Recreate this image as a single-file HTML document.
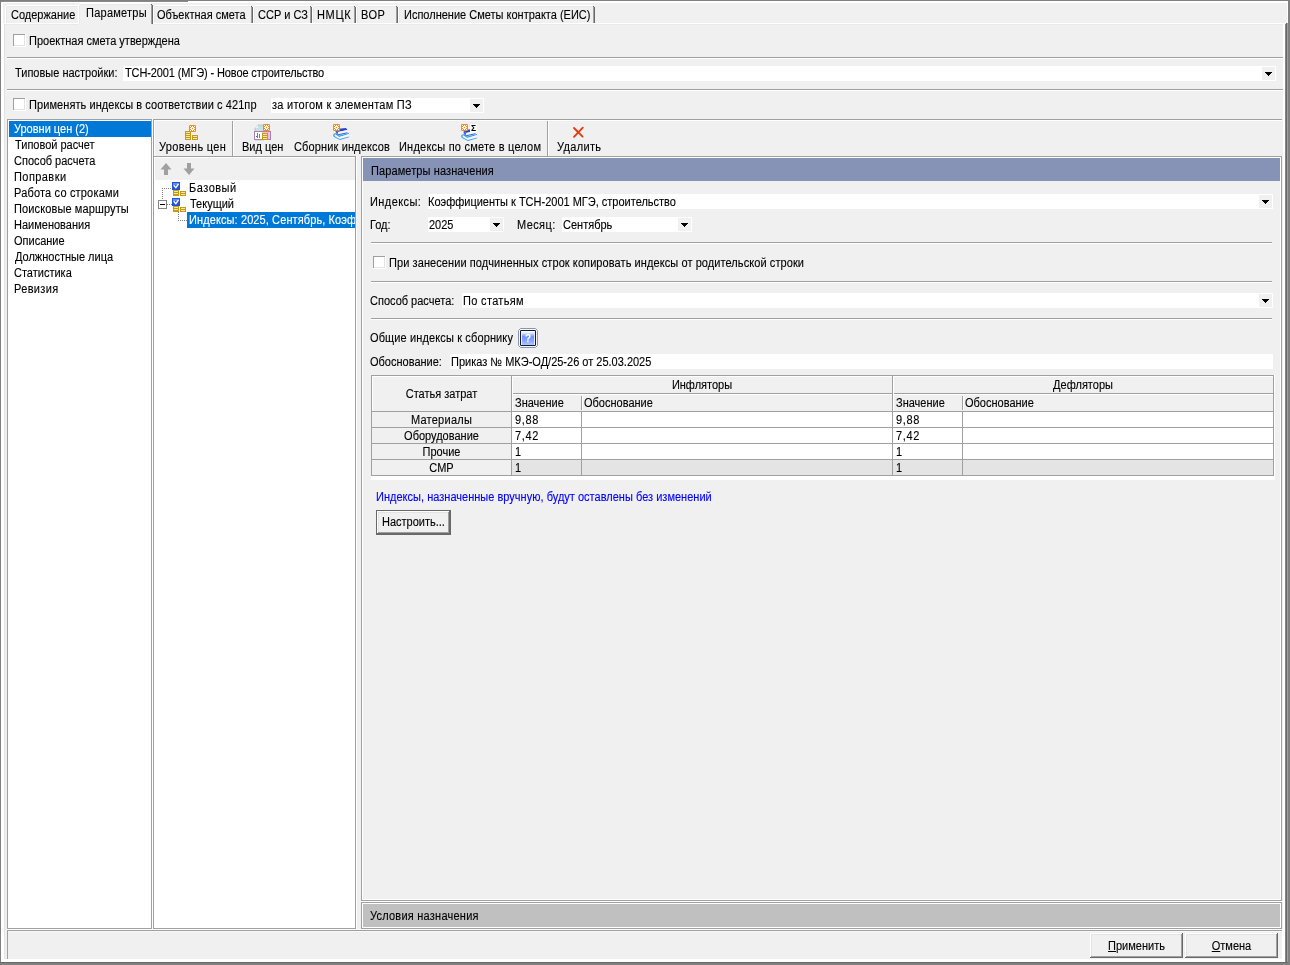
<!DOCTYPE html>
<html lang="ru"><head><meta charset="utf-8"><title>Параметры</title>
<style>
html,body{margin:0;padding:0}
body{width:1290px;height:965px;background:#f0f0f0;position:relative;overflow:hidden;
font-family:"Liberation Sans",sans-serif;font-size:12px;line-height:14px}
#w{position:absolute;left:0;top:0;width:1290px;height:965px;will-change:transform}
#w>div,#w>span,#w>svg{position:absolute}
.t{-webkit-text-stroke:0.12px currentColor;white-space:nowrap;display:block;height:14px;transform:scaleX(0.9167);transform-origin:0 0}
.c{text-align:center;transform-origin:50% 0}
u{text-decoration:underline;text-underline-offset:1px}
</style></head><body><div id="w">
<div style="left:0px;top:0px;width:1290px;height:1px;background:#808080;"></div>
<div style="left:0px;top:1px;width:188px;height:1px;background:#8a8a8a;"></div>
<div style="left:188px;top:1px;width:1100px;height:1px;background:#ffffff;"></div>
<div style="left:1px;top:2px;width:1287px;height:1px;background:#ffffff;"></div>
<div style="left:0px;top:0px;width:1px;height:965px;background:#808080;"></div>
<div style="left:1px;top:2px;width:2px;height:960px;background:#ffffff;"></div>
<div style="left:1288px;top:0px;width:2px;height:965px;background:#808080;"></div>
<div style="left:1287px;top:1px;width:1px;height:22px;background:#ffffff;"></div>
<div style="left:3px;top:23px;width:1282px;height:1px;background:#ffffff;"></div>
<div style="left:3px;top:24px;width:1280px;height:1px;background:#e9e9e9;"></div>
<div style="left:3px;top:23px;width:1px;height:939px;background:#ffffff;"></div>
<div style="left:4px;top:24px;width:1px;height:935px;background:#e3e3e3;"></div>
<div style="left:1283px;top:24px;width:2px;height:938px;background:#ffffff;"></div>
<div style="left:1285px;top:24px;width:1px;height:939px;background:#868686;"></div>
<div style="left:1286px;top:23px;width:1px;height:940px;background:#696969;"></div>
<div style="left:1287px;top:23px;width:1px;height:940px;background:#a0a0a0;"></div>
<div style="left:1px;top:959px;width:1284px;height:3px;background:#ffffff;"></div>
<div style="left:0px;top:962px;width:1288px;height:1px;background:#696969;"></div>
<div style="left:0px;top:963px;width:1290px;height:2px;background:#808080;"></div>
<div style="left:5px;top:7px;width:75px;height:16px;background:#f0f0f0;"></div>
<div style="left:7px;top:5px;width:71px;height:1px;background:#ffffff;"></div>
<div style="left:6px;top:6px;width:1px;height:1px;background:#ffffff;"></div>
<div style="left:5px;top:7px;width:1px;height:16px;background:#ffffff;"></div>
<div style="left:6px;top:7px;width:1px;height:16px;background:#e9e9e9;"></div>
<div style="left:7px;top:6px;width:71px;height:1px;background:#e9e9e9;"></div>
<div style="left:78px;top:7px;width:1px;height:16px;background:#a0a0a0;"></div>
<div style="left:79px;top:7px;width:1px;height:16px;background:#696969;"></div>
<div style="left:78px;top:6px;width:1px;height:1px;background:#696969;"></div>
<span class="t" style="left:11px;top:8px;color:#000;">Содержание</span>
<div style="left:153px;top:7px;width:100px;height:16px;background:#f0f0f0;"></div>
<div style="left:155px;top:5px;width:96px;height:1px;background:#ffffff;"></div>
<div style="left:154px;top:6px;width:1px;height:1px;background:#ffffff;"></div>
<div style="left:153px;top:7px;width:1px;height:16px;background:#ffffff;"></div>
<div style="left:154px;top:7px;width:1px;height:16px;background:#e9e9e9;"></div>
<div style="left:155px;top:6px;width:96px;height:1px;background:#e9e9e9;"></div>
<div style="left:251px;top:7px;width:1px;height:16px;background:#a0a0a0;"></div>
<div style="left:252px;top:7px;width:1px;height:16px;background:#696969;"></div>
<div style="left:251px;top:6px;width:1px;height:1px;background:#696969;"></div>
<span class="t" style="left:157px;top:8px;color:#000;">Объектная смета</span>
<div style="left:253px;top:7px;width:59px;height:16px;background:#f0f0f0;"></div>
<div style="left:255px;top:5px;width:55px;height:1px;background:#ffffff;"></div>
<div style="left:254px;top:6px;width:1px;height:1px;background:#ffffff;"></div>
<div style="left:253px;top:7px;width:1px;height:16px;background:#ffffff;"></div>
<div style="left:254px;top:7px;width:1px;height:16px;background:#e9e9e9;"></div>
<div style="left:255px;top:6px;width:55px;height:1px;background:#e9e9e9;"></div>
<div style="left:310px;top:7px;width:1px;height:16px;background:#a0a0a0;"></div>
<div style="left:311px;top:7px;width:1px;height:16px;background:#696969;"></div>
<div style="left:310px;top:6px;width:1px;height:1px;background:#696969;"></div>
<span class="t" style="left:258px;top:8px;color:#000;">ССР и СЗ</span>
<div style="left:312px;top:7px;width:44px;height:16px;background:#f0f0f0;"></div>
<div style="left:314px;top:5px;width:40px;height:1px;background:#ffffff;"></div>
<div style="left:313px;top:6px;width:1px;height:1px;background:#ffffff;"></div>
<div style="left:312px;top:7px;width:1px;height:16px;background:#ffffff;"></div>
<div style="left:313px;top:7px;width:1px;height:16px;background:#e9e9e9;"></div>
<div style="left:314px;top:6px;width:40px;height:1px;background:#e9e9e9;"></div>
<div style="left:354px;top:7px;width:1px;height:16px;background:#a0a0a0;"></div>
<div style="left:355px;top:7px;width:1px;height:16px;background:#696969;"></div>
<div style="left:354px;top:6px;width:1px;height:1px;background:#696969;"></div>
<span class="t" style="left:317px;top:8px;color:#000;letter-spacing:0.727px;">НМЦК</span>
<div style="left:356px;top:7px;width:42px;height:16px;background:#f0f0f0;"></div>
<div style="left:358px;top:5px;width:38px;height:1px;background:#ffffff;"></div>
<div style="left:357px;top:6px;width:1px;height:1px;background:#ffffff;"></div>
<div style="left:356px;top:7px;width:1px;height:16px;background:#ffffff;"></div>
<div style="left:357px;top:7px;width:1px;height:16px;background:#e9e9e9;"></div>
<div style="left:358px;top:6px;width:38px;height:1px;background:#e9e9e9;"></div>
<div style="left:396px;top:7px;width:1px;height:16px;background:#a0a0a0;"></div>
<div style="left:397px;top:7px;width:1px;height:16px;background:#696969;"></div>
<div style="left:396px;top:6px;width:1px;height:1px;background:#696969;"></div>
<span class="t" style="left:361px;top:8px;color:#000;letter-spacing:0.545px;">ВОР</span>
<div style="left:398px;top:7px;width:197px;height:16px;background:#f0f0f0;"></div>
<div style="left:400px;top:5px;width:193px;height:1px;background:#ffffff;"></div>
<div style="left:399px;top:6px;width:1px;height:1px;background:#ffffff;"></div>
<div style="left:398px;top:7px;width:1px;height:16px;background:#ffffff;"></div>
<div style="left:399px;top:7px;width:1px;height:16px;background:#e9e9e9;"></div>
<div style="left:400px;top:6px;width:193px;height:1px;background:#e9e9e9;"></div>
<div style="left:593px;top:7px;width:1px;height:16px;background:#a0a0a0;"></div>
<div style="left:594px;top:7px;width:1px;height:16px;background:#696969;"></div>
<div style="left:593px;top:6px;width:1px;height:1px;background:#696969;"></div>
<span class="t" style="left:404px;top:8px;color:#000;">Исполнение Сметы контракта (ЕИС)</span>
<div style="left:78px;top:23px;width:73px;height:2px;background:#f0f0f0;"></div>
<div style="left:78px;top:5px;width:75px;height:19px;background:#f0f0f0;"></div>
<div style="left:80px;top:3px;width:71px;height:1px;background:#ffffff;"></div>
<div style="left:79px;top:4px;width:1px;height:1px;background:#ffffff;"></div>
<div style="left:78px;top:5px;width:1px;height:19px;background:#ffffff;"></div>
<div style="left:79px;top:5px;width:1px;height:19px;background:#e9e9e9;"></div>
<div style="left:80px;top:4px;width:71px;height:1px;background:#e9e9e9;"></div>
<div style="left:151px;top:5px;width:1px;height:19px;background:#a0a0a0;"></div>
<div style="left:152px;top:5px;width:1px;height:19px;background:#696969;"></div>
<div style="left:151px;top:4px;width:1px;height:1px;background:#696969;"></div>
<span class="t" style="left:86px;top:6px;color:#000;letter-spacing:0.273px;">Параметры</span>
<div style="left:13px;top:34px;width:13px;height:13px;background:#ffffff;"></div>
<div style="left:13px;top:34px;width:13px;height:1px;background:#a0a0a0;"></div>
<div style="left:13px;top:34px;width:1px;height:13px;background:#a0a0a0;"></div>
<div style="left:24px;top:35px;width:1px;height:11px;background:#e3e3e3;"></div>
<div style="left:14px;top:45px;width:11px;height:1px;background:#e3e3e3;"></div>
<div style="left:25px;top:34px;width:1px;height:13px;background:#ffffff;"></div>
<div style="left:13px;top:46px;width:13px;height:1px;background:#ffffff;"></div>
<span class="t" style="left:29px;top:34px;color:#000;">Проектная смета утверждена</span>
<div style="left:7px;top:57px;width:1276px;height:1px;background:#a0a0a0;"></div>
<div style="left:7px;top:58px;width:1276px;height:1px;background:#ffffff;"></div>
<span class="t" style="left:15px;top:66px;color:#000;">Типовые настройки:</span>
<div style="left:123px;top:66px;width:1153px;height:15px;background:#ffffff;"></div>
<div style="left:1262px;top:67px;width:13px;height:13px;background:#f0f0f0;"></div>
<div style="left:1265px;top:72px;width:7px;height:1px;background:#000;"></div>
<div style="left:1266px;top:73px;width:5px;height:1px;background:#000;"></div>
<div style="left:1267px;top:74px;width:3px;height:1px;background:#000;"></div>
<div style="left:1268px;top:75px;width:1px;height:1px;background:#000;"></div>
<span class="t" style="left:125px;top:66px;color:#000;letter-spacing:-0.125px;">ТСН-2001 (МГЭ) - Новое строительство</span>
<div style="left:7px;top:89px;width:1276px;height:1px;background:#a0a0a0;"></div>
<div style="left:7px;top:90px;width:1276px;height:1px;background:#ffffff;"></div>
<div style="left:13px;top:98px;width:13px;height:13px;background:#ffffff;"></div>
<div style="left:13px;top:98px;width:13px;height:1px;background:#a0a0a0;"></div>
<div style="left:13px;top:98px;width:1px;height:13px;background:#a0a0a0;"></div>
<div style="left:24px;top:99px;width:1px;height:11px;background:#e3e3e3;"></div>
<div style="left:14px;top:109px;width:11px;height:1px;background:#e3e3e3;"></div>
<div style="left:25px;top:98px;width:1px;height:13px;background:#ffffff;"></div>
<div style="left:13px;top:110px;width:13px;height:1px;background:#ffffff;"></div>
<span class="t" style="left:29px;top:98px;color:#000;letter-spacing:0.084px;">Применять индексы в соответствии с 421пр</span>
<div style="left:271px;top:98px;width:213px;height:15px;background:#ffffff;"></div>
<div style="left:470px;top:99px;width:13px;height:13px;background:#f0f0f0;"></div>
<div style="left:473px;top:104px;width:7px;height:1px;background:#000;"></div>
<div style="left:474px;top:105px;width:5px;height:1px;background:#000;"></div>
<div style="left:475px;top:106px;width:3px;height:1px;background:#000;"></div>
<div style="left:476px;top:107px;width:1px;height:1px;background:#000;"></div>
<span class="t" style="left:272px;top:98px;color:#000;letter-spacing:0.285px;">за итогом к элементам ПЗ</span>
<div style="left:7px;top:119px;width:1275px;height:1px;background:#a0a0a0;"></div>
<div style="left:7px;top:119px;width:1px;height:810px;background:#a0a0a0;"></div>
<div style="left:8px;top:120px;width:143px;height:808px;background:#ffffff;"></div>
<div style="left:151px;top:119px;width:1px;height:810px;background:#a0a0a0;"></div>
<div style="left:7px;top:928px;width:145px;height:1px;background:#a0a0a0;"></div>
<div style="left:152px;top:119px;width:1px;height:811px;background:#ffffff;"></div>
<div style="left:7px;top:929px;width:1276px;height:1px;background:#ffffff;"></div>
<div style="left:361px;top:901px;width:922px;height:1px;background:#ffffff;"></div>
<div style="left:9px;top:121px;width:142px;height:16px;background:#0078d7;"></div>
<span class="t" style="left:14px;top:122px;color:#fff;">Уровни цен (2)</span>
<span class="t" style="left:15px;top:138px;color:#000;">Типовой расчет</span>
<span class="t" style="left:14px;top:154px;color:#000;">Способ расчета</span>
<span class="t" style="left:14px;top:170px;color:#000;letter-spacing:0.468px;">Поправки</span>
<span class="t" style="left:14px;top:186px;color:#000;letter-spacing:0.193px;">Работа со строками</span>
<span class="t" style="left:14px;top:202px;color:#000;letter-spacing:0.128px;">Поисковые маршруты</span>
<span class="t" style="left:14px;top:218px;color:#000;">Наименования</span>
<span class="t" style="left:14px;top:234px;color:#000;">Описание</span>
<span class="t" style="left:15px;top:250px;color:#000;">Должностные лица</span>
<span class="t" style="left:14px;top:266px;color:#000;">Статистика</span>
<span class="t" style="left:14px;top:282px;color:#000;letter-spacing:0.364px;">Ревизия</span>
<div style="left:153px;top:119px;width:1px;height:38px;background:#a0a0a0;"></div>
<div style="left:154px;top:120px;width:1128px;height:1px;background:#ffffff;"></div>
<div style="left:154px;top:120px;width:1px;height:36px;background:#ffffff;"></div>
<div style="left:232px;top:121px;width:1px;height:35px;background:#a0a0a0;"></div>
<div style="left:233px;top:121px;width:1px;height:35px;background:#ffffff;"></div>
<div style="left:547px;top:121px;width:1px;height:35px;background:#a0a0a0;"></div>
<div style="left:548px;top:121px;width:1px;height:35px;background:#ffffff;"></div>
<span class="t" style="left:159px;top:140px;color:#000;letter-spacing:0.327px;">Уровень цен</span>
<span class="t" style="left:242px;top:140px;color:#000;">Вид цен</span>
<span class="t" style="left:294px;top:140px;color:#000;letter-spacing:0.145px;">Сборник индексов</span>
<span class="t" style="left:399px;top:140px;color:#000;letter-spacing:0.237px;">Индексы по смете в целом</span>
<span class="t" style="left:557px;top:140px;color:#000;letter-spacing:0.364px;">Удалить</span>
<div style="left:153px;top:156px;width:203px;height:1px;background:#a0a0a0;"></div>
<div style="left:153px;top:156px;width:1px;height:773px;background:#a0a0a0;"></div>
<div style="left:355px;top:156px;width:1px;height:773px;background:#a0a0a0;"></div>
<div style="left:356px;top:156px;width:1px;height:773px;background:#ffffff;"></div>
<div style="left:153px;top:928px;width:203px;height:1px;background:#a0a0a0;"></div>
<div style="left:154px;top:157px;width:201px;height:771px;background:#ffffff;"></div>
<div style="left:155px;top:158px;width:200px;height:22px;background:#f0f0f0;"></div>
<span class="t" style="left:189px;top:181px;color:#000;letter-spacing:0.545px;">Базовый</span>
<span class="t" style="left:190px;top:197px;color:#000;">Текущий</span>
<div style="left:187px;top:212px;width:168px;height:16px;background:#0078d7;"></div>
<span class="t" style="left:189px;top:213px;color:#fff;letter-spacing:0.113px;width:181px;overflow:hidden">Индексы: 2025, Сентябрь, Коэфф</span>
<div style="left:361px;top:156px;width:921px;height:1px;background:#a0a0a0;"></div>
<div style="left:361px;top:156px;width:1px;height:745px;background:#a0a0a0;"></div>
<div style="left:1281px;top:156px;width:1px;height:745px;background:#a0a0a0;"></div>
<div style="left:361px;top:900px;width:921px;height:1px;background:#a0a0a0;"></div>
<div style="left:362px;top:157px;width:919px;height:1px;background:#ffffff;"></div>
<div style="left:362px;top:157px;width:1px;height:743px;background:#ffffff;"></div>
<div style="left:1280px;top:157px;width:1px;height:743px;background:#ffffff;"></div>
<div style="left:362px;top:899px;width:919px;height:1px;background:#ffffff;"></div>
<div style="left:363px;top:158px;width:917px;height:23px;background:#8693b7;"></div>
<span class="t" style="left:371px;top:164px;color:#000;letter-spacing:0.115px;">Параметры назначения</span>
<span class="t" style="left:370px;top:195px;color:#000;letter-spacing:0.468px;">Индексы:</span>
<div style="left:428px;top:194px;width:845px;height:15px;background:#ffffff;"></div>
<div style="left:1259px;top:195px;width:13px;height:13px;background:#f0f0f0;"></div>
<div style="left:1262px;top:200px;width:7px;height:1px;background:#000;"></div>
<div style="left:1263px;top:201px;width:5px;height:1px;background:#000;"></div>
<div style="left:1264px;top:202px;width:3px;height:1px;background:#000;"></div>
<div style="left:1265px;top:203px;width:1px;height:1px;background:#000;"></div>
<span class="t" style="left:428px;top:195px;color:#000;">Коэффициенты к ТСН-2001 МГЭ, строительство</span>
<span class="t" style="left:370px;top:218px;color:#000;">Год:</span>
<div style="left:428px;top:217px;width:76px;height:15px;background:#ffffff;"></div>
<div style="left:490px;top:218px;width:13px;height:13px;background:#f0f0f0;"></div>
<div style="left:493px;top:223px;width:7px;height:1px;background:#000;"></div>
<div style="left:494px;top:224px;width:5px;height:1px;background:#000;"></div>
<div style="left:495px;top:225px;width:3px;height:1px;background:#000;"></div>
<div style="left:496px;top:226px;width:1px;height:1px;background:#000;"></div>
<span class="t" style="left:429px;top:218px;color:#000;">2025</span>
<span class="t" style="left:517px;top:218px;color:#000;letter-spacing:0.436px;">Месяц:</span>
<div style="left:562px;top:217px;width:130px;height:15px;background:#ffffff;"></div>
<div style="left:678px;top:218px;width:13px;height:13px;background:#f0f0f0;"></div>
<div style="left:681px;top:223px;width:7px;height:1px;background:#000;"></div>
<div style="left:682px;top:224px;width:5px;height:1px;background:#000;"></div>
<div style="left:683px;top:225px;width:3px;height:1px;background:#000;"></div>
<div style="left:684px;top:226px;width:1px;height:1px;background:#000;"></div>
<span class="t" style="left:563px;top:218px;color:#000;">Сентябрь</span>
<div style="left:371px;top:242px;width:901px;height:1px;background:#a0a0a0;"></div>
<div style="left:371px;top:243px;width:901px;height:1px;background:#ffffff;"></div>
<div style="left:373px;top:256px;width:13px;height:13px;background:#ffffff;"></div>
<div style="left:373px;top:256px;width:13px;height:1px;background:#a0a0a0;"></div>
<div style="left:373px;top:256px;width:1px;height:13px;background:#a0a0a0;"></div>
<div style="left:384px;top:257px;width:1px;height:11px;background:#e3e3e3;"></div>
<div style="left:374px;top:267px;width:11px;height:1px;background:#e3e3e3;"></div>
<div style="left:385px;top:256px;width:1px;height:13px;background:#ffffff;"></div>
<div style="left:373px;top:268px;width:13px;height:1px;background:#ffffff;"></div>
<span class="t" style="left:389px;top:256px;color:#000;letter-spacing:0.091px;">При занесении подчиненных строк копировать индексы от родительской строки</span>
<div style="left:371px;top:281px;width:901px;height:1px;background:#a0a0a0;"></div>
<div style="left:371px;top:282px;width:901px;height:1px;background:#ffffff;"></div>
<span class="t" style="left:370px;top:294px;color:#000;">Способ расчета:</span>
<div style="left:462px;top:293px;width:811px;height:15px;background:#ffffff;"></div>
<div style="left:1259px;top:294px;width:13px;height:13px;background:#f0f0f0;"></div>
<div style="left:1262px;top:299px;width:7px;height:1px;background:#000;"></div>
<div style="left:1263px;top:300px;width:5px;height:1px;background:#000;"></div>
<div style="left:1264px;top:301px;width:3px;height:1px;background:#000;"></div>
<div style="left:1265px;top:302px;width:1px;height:1px;background:#000;"></div>
<span class="t" style="left:463px;top:294px;color:#000;letter-spacing:0.364px;">По статьям</span>
<div style="left:371px;top:318px;width:901px;height:1px;background:#a0a0a0;"></div>
<div style="left:371px;top:319px;width:901px;height:1px;background:#ffffff;"></div>
<span class="t" style="left:370px;top:331px;color:#000;letter-spacing:0.142px;">Общие индексы к сборнику</span>
<span class="t" style="left:370px;top:355px;color:#000;">Обоснование:</span>
<div style="left:450px;top:354px;width:823px;height:15px;background:#ffffff;"></div>
<span class="t" style="left:451px;top:355px;color:#000;">Приказ № МКЭ-ОД/25-26 от 25.03.2025</span>
<div style="left:371px;top:375px;width:904px;height:105px;background:#ffffff;"></div>
<div style="left:371px;top:375px;width:903px;height:37px;background:#f0f0f0;"></div>
<div style="left:371px;top:412px;width:141px;height:64px;background:#f0f0f0;"></div>
<div style="left:512px;top:460px;width:762px;height:16px;background:#e4e4e4;"></div>
<div style="left:371px;top:375px;width:903px;height:1px;background:#a0a0a0;"></div>
<div style="left:371px;top:375px;width:1px;height:101px;background:#a0a0a0;"></div>
<div style="left:1273px;top:375px;width:1px;height:101px;background:#a0a0a0;"></div>
<div style="left:511px;top:375px;width:1px;height:101px;background:#a0a0a0;"></div>
<div style="left:892px;top:375px;width:1px;height:101px;background:#a0a0a0;"></div>
<div style="left:581px;top:396px;width:1px;height:14px;background:#a0a0a0;"></div>
<div style="left:581px;top:411px;width:1px;height:65px;background:#a0a0a0;"></div>
<div style="left:962px;top:396px;width:1px;height:14px;background:#a0a0a0;"></div>
<div style="left:962px;top:411px;width:1px;height:65px;background:#a0a0a0;"></div>
<div style="left:511px;top:393px;width:763px;height:1px;background:#a0a0a0;"></div>
<div style="left:371px;top:411px;width:903px;height:1px;background:#a0a0a0;"></div>
<div style="left:371px;top:427px;width:903px;height:1px;background:#a0a0a0;"></div>
<div style="left:371px;top:443px;width:903px;height:1px;background:#a0a0a0;"></div>
<div style="left:371px;top:459px;width:903px;height:1px;background:#a0a0a0;"></div>
<div style="left:371px;top:475px;width:903px;height:1px;background:#a0a0a0;"></div>
<div style="left:372px;top:376px;width:139px;height:1px;background:#ffffff;"></div>
<div style="left:372px;top:376px;width:1px;height:35px;background:#ffffff;"></div>
<div style="left:512px;top:376px;width:380px;height:1px;background:#ffffff;"></div>
<div style="left:512px;top:376px;width:1px;height:35px;background:#ffffff;"></div>
<div style="left:893px;top:376px;width:380px;height:1px;background:#ffffff;"></div>
<div style="left:893px;top:376px;width:1px;height:35px;background:#ffffff;"></div>
<div style="left:512px;top:394px;width:380px;height:1px;background:#ffffff;"></div>
<div style="left:893px;top:394px;width:380px;height:1px;background:#ffffff;"></div>
<div style="left:582px;top:396px;width:1px;height:14px;background:#ffffff;"></div>
<div style="left:963px;top:396px;width:1px;height:14px;background:#ffffff;"></div>
<span class="t c" style="left:372px;width:139px;top:387px;color:#000;">Статья затрат</span>
<span class="t c" style="left:512px;width:380px;top:378px;color:#000;">Инфляторы</span>
<span class="t c" style="left:893px;width:380px;top:378px;color:#000;">Дефляторы</span>
<span class="t" style="left:515px;top:396px;color:#000;">Значение</span>
<span class="t" style="left:584px;top:396px;color:#000;">Обоснование</span>
<span class="t" style="left:896px;top:396px;color:#000;">Значение</span>
<span class="t" style="left:965px;top:396px;color:#000;">Обоснование</span>
<span class="t c" style="left:372px;width:139px;top:413px;color:#000;letter-spacing:0.273px;">Материалы</span>
<span class="t" style="left:515px;top:413px;color:#000;letter-spacing:0.727px;">9,88</span>
<span class="t" style="left:896px;top:413px;color:#000;letter-spacing:0.727px;">9,88</span>
<span class="t c" style="left:372px;width:139px;top:429px;color:#000;">Оборудование</span>
<span class="t" style="left:515px;top:429px;color:#000;letter-spacing:0.727px;">7,42</span>
<span class="t" style="left:896px;top:429px;color:#000;letter-spacing:0.727px;">7,42</span>
<span class="t c" style="left:372px;width:139px;top:445px;color:#000;">Прочие</span>
<span class="t" style="left:515px;top:445px;color:#000;">1</span>
<span class="t" style="left:896px;top:445px;color:#000;">1</span>
<span class="t c" style="left:372px;width:139px;top:461px;color:#000;">СМР</span>
<span class="t" style="left:515px;top:461px;color:#000;">1</span>
<span class="t" style="left:896px;top:461px;color:#000;">1</span>
<span class="t" style="left:376px;top:490px;color:#0000ff;letter-spacing:0.019px;">Индексы, назначенные вручную, будут оставлены без изменений</span>
<div style="left:376px;top:510px;width:75px;height:25px;background:#696969;"></div>
<div style="left:377px;top:511px;width:73px;height:23px;background:#f0f0f0;"></div>
<div style="left:377px;top:511px;width:73px;height:1px;background:#ffffff;"></div>
<div style="left:377px;top:511px;width:1px;height:23px;background:#ffffff;"></div>
<div style="left:378px;top:512px;width:71px;height:1px;background:#e3e3e3;"></div>
<div style="left:378px;top:512px;width:1px;height:21px;background:#e3e3e3;"></div>
<div style="left:378px;top:532px;width:71px;height:1px;background:#a0a0a0;"></div>
<div style="left:448px;top:512px;width:1px;height:21px;background:#a0a0a0;"></div>
<div style="left:377px;top:533px;width:73px;height:1px;background:#696969;"></div>
<div style="left:449px;top:511px;width:1px;height:23px;background:#696969;"></div>
<span class="t" style="left:382px;top:515px;color:#000;">Настроить...</span>
<div style="left:361px;top:902px;width:921px;height:1px;background:#a0a0a0;"></div>
<div style="left:361px;top:902px;width:1px;height:27px;background:#a0a0a0;"></div>
<div style="left:1281px;top:902px;width:1px;height:27px;background:#a0a0a0;"></div>
<div style="left:361px;top:928px;width:921px;height:1px;background:#a0a0a0;"></div>
<div style="left:362px;top:903px;width:919px;height:25px;background:#ffffff;"></div>
<div style="left:363px;top:904px;width:917px;height:23px;background:#c0c0c0;"></div>
<span class="t" style="left:370px;top:909px;color:#000;letter-spacing:0.257px;">Условия назначения</span>
<div style="left:7px;top:930px;width:1275px;height:1px;background:#a0a0a0;"></div>
<div style="left:7px;top:930px;width:1px;height:29px;background:#a0a0a0;"></div>
<div style="left:8px;top:931px;width:1274px;height:1px;background:#f8f8f8;"></div>
<div style="left:1282px;top:930px;width:1px;height:29px;background:#ffffff;"></div>
<div style="left:1090px;top:933px;width:93px;height:25px;background:#f0f0f0;"></div>
<div style="left:1090px;top:933px;width:93px;height:1px;background:#ffffff;"></div>
<div style="left:1090px;top:933px;width:1px;height:25px;background:#ffffff;"></div>
<div style="left:1091px;top:934px;width:91px;height:1px;background:#e3e3e3;"></div>
<div style="left:1091px;top:934px;width:1px;height:23px;background:#e3e3e3;"></div>
<div style="left:1091px;top:956px;width:91px;height:1px;background:#a0a0a0;"></div>
<div style="left:1181px;top:934px;width:1px;height:23px;background:#a0a0a0;"></div>
<div style="left:1090px;top:957px;width:93px;height:1px;background:#696969;"></div>
<div style="left:1182px;top:933px;width:1px;height:25px;background:#696969;"></div>
<div style="left:1185px;top:933px;width:93px;height:25px;background:#f0f0f0;"></div>
<div style="left:1185px;top:933px;width:93px;height:1px;background:#ffffff;"></div>
<div style="left:1185px;top:933px;width:1px;height:25px;background:#ffffff;"></div>
<div style="left:1186px;top:934px;width:91px;height:1px;background:#e3e3e3;"></div>
<div style="left:1186px;top:934px;width:1px;height:23px;background:#e3e3e3;"></div>
<div style="left:1186px;top:956px;width:91px;height:1px;background:#a0a0a0;"></div>
<div style="left:1276px;top:934px;width:1px;height:23px;background:#a0a0a0;"></div>
<div style="left:1185px;top:957px;width:93px;height:1px;background:#696969;"></div>
<div style="left:1277px;top:933px;width:1px;height:25px;background:#696969;"></div>
<span class="t c" style="left:1090px;width:93px;top:939px;color:#000;"><u>П</u>рименить</span>
<span class="t c" style="left:1185px;width:93px;top:939px;color:#000;"><u>О</u>тмена</span>
<svg width="1290" height="965" viewBox="0 0 1290 965" style="left:0;top:0" shape-rendering="crispEdges"><rect x="189" y="125" width="7" height="7" rx="1.2" fill="#f68a14" shape-rendering="auto"/><rect x="190" y="126" width="1" height="1" fill="#fff8ee" /><rect x="192" y="126" width="1" height="1" fill="#fff8ee" /><rect x="194" y="126" width="1" height="1" fill="#fff8ee" /><rect x="191" y="127" width="1" height="1" fill="#fff8ee" /><rect x="192" y="127" width="1" height="1" fill="#fff8ee" /><rect x="193" y="127" width="1" height="1" fill="#fff8ee" /><rect x="190" y="128" width="1" height="1" fill="#fff8ee" /><rect x="191" y="128" width="1" height="1" fill="#fff8ee" /><rect x="193" y="128" width="1" height="1" fill="#fff8ee" /><rect x="194" y="128" width="1" height="1" fill="#fff8ee" /><rect x="191" y="129" width="1" height="1" fill="#fff8ee" /><rect x="192" y="129" width="1" height="1" fill="#fff8ee" /><rect x="193" y="129" width="1" height="1" fill="#fff8ee" /><rect x="190" y="130" width="1" height="1" fill="#fff8ee" /><rect x="192" y="130" width="1" height="1" fill="#fff8ee" /><rect x="194" y="130" width="1" height="1" fill="#fff8ee" /><rect x="185" y="131" width="6" height="9" fill="#c39a1c" /><rect x="186" y="132" width="4" height="1" fill="#fbe7a0" /><rect x="186" y="134" width="4" height="1" fill="#fbe7a0" /><rect x="186" y="136" width="4" height="1" fill="#fbe7a0" /><rect x="186" y="138" width="4" height="1" fill="#fbe7a0" /><rect x="192" y="135" width="6" height="5" fill="#c39a1c" /><rect x="193" y="136" width="4" height="1" fill="#fbe7a0" /><rect x="193" y="138" width="4" height="1" fill="#fbe7a0" /><polygon points="258,125 264,125 264,140 255,140 255,128" fill="#c9dfe2" stroke="#9ab8bd" stroke-width="0.6" shape-rendering="auto"/><polygon points="255,128 258,128 258,125" fill="#eef6f7" shape-rendering="auto"/><rect x="254" y="131" width="17" height="9" fill="#a982ad" /><rect x="255" y="132" width="15" height="7" fill="#efbdf0" /><rect x="255" y="132" width="7" height="7" fill="#ffffff" /><rect x="257" y="133" width="1" height="5" fill="#e0409a" /><rect x="259" y="134" width="1" height="4" fill="#e0409a" /><rect x="256" y="136" width="1" height="1" fill="#805090" /><rect x="263" y="124" width="7" height="7" rx="1.2" fill="#f68a14" shape-rendering="auto"/><rect x="264" y="125" width="1" height="1" fill="#fff8ee" /><rect x="266" y="125" width="1" height="1" fill="#fff8ee" /><rect x="268" y="125" width="1" height="1" fill="#fff8ee" /><rect x="265" y="126" width="1" height="1" fill="#fff8ee" /><rect x="266" y="126" width="1" height="1" fill="#fff8ee" /><rect x="267" y="126" width="1" height="1" fill="#fff8ee" /><rect x="264" y="127" width="1" height="1" fill="#fff8ee" /><rect x="265" y="127" width="1" height="1" fill="#fff8ee" /><rect x="267" y="127" width="1" height="1" fill="#fff8ee" /><rect x="268" y="127" width="1" height="1" fill="#fff8ee" /><rect x="265" y="128" width="1" height="1" fill="#fff8ee" /><rect x="266" y="128" width="1" height="1" fill="#fff8ee" /><rect x="267" y="128" width="1" height="1" fill="#fff8ee" /><rect x="264" y="129" width="1" height="1" fill="#fff8ee" /><rect x="266" y="129" width="1" height="1" fill="#fff8ee" /><rect x="268" y="129" width="1" height="1" fill="#fff8ee" /><rect x="262" y="133" width="6" height="7" fill="#c39a1c" /><rect x="263" y="134" width="4" height="1" fill="#fbe7a0" /><rect x="263" y="136" width="4" height="1" fill="#fbe7a0" /><rect x="263" y="138" width="4" height="1" fill="#fbe7a0" /><g shape-rendering="auto"><polygon points="336,129 346,128 347.5,130 338,132" fill="#2846c8"/><polygon points="336,129 338,132 338,134.5 335.5,132" fill="#3c5ae0"/><polygon points="338,132 347.5,130 347.5,132.5 338,134.5" fill="#f4f6fb"/><polygon points="338,134.3 347.5,132.3 347.5,133.2 338,135.2" fill="#3c5ae0"/><polygon points="334,133.5 337,133 339,135.5 349,133 349,134 339.5,137" fill="#3a9fe3"/><polygon points="339.5,137 349,134 349,136.5 339.5,139" fill="#f4f6fb"/><path d="M334,133.5 C332.5,135 333,136.5 335,137.5 L340,140 L349,137.3 L349,136.4 L339.8,139 L335.5,136.8 C334.3,136 334.2,135 335,134.3 Z" fill="#3a9fe3"/></g><rect x="333" y="124" width="7" height="7" rx="1.2" fill="#f68a14" shape-rendering="auto"/><rect x="334" y="125" width="1" height="1" fill="#fff8ee" /><rect x="336" y="125" width="1" height="1" fill="#fff8ee" /><rect x="338" y="125" width="1" height="1" fill="#fff8ee" /><rect x="335" y="126" width="1" height="1" fill="#fff8ee" /><rect x="336" y="126" width="1" height="1" fill="#fff8ee" /><rect x="337" y="126" width="1" height="1" fill="#fff8ee" /><rect x="334" y="127" width="1" height="1" fill="#fff8ee" /><rect x="335" y="127" width="1" height="1" fill="#fff8ee" /><rect x="337" y="127" width="1" height="1" fill="#fff8ee" /><rect x="338" y="127" width="1" height="1" fill="#fff8ee" /><rect x="335" y="128" width="1" height="1" fill="#fff8ee" /><rect x="336" y="128" width="1" height="1" fill="#fff8ee" /><rect x="337" y="128" width="1" height="1" fill="#fff8ee" /><rect x="334" y="129" width="1" height="1" fill="#fff8ee" /><rect x="336" y="129" width="1" height="1" fill="#fff8ee" /><rect x="338" y="129" width="1" height="1" fill="#fff8ee" /><g shape-rendering="auto"><polygon points="464,130 474,129 475.5,131 466,133" fill="#2846c8"/><polygon points="464,130 466,133 466,135.5 463.5,133" fill="#3c5ae0"/><polygon points="466,133 475.5,131 475.5,133.5 466,135.5" fill="#f4f6fb"/><polygon points="466,135.3 475.5,133.3 475.5,134.2 466,136.2" fill="#3c5ae0"/><polygon points="462,134.5 465,134 467,136.5 477,134 477,135 467.5,138" fill="#3a9fe3"/><polygon points="467.5,138 477,135 477,137.5 467.5,140" fill="#f4f6fb"/><path d="M462,134.5 C460.5,136 461,137.5 463,138.5 L468,141 L477,138.3 L477,137.4 L467.8,140 L463.5,137.8 C462.3,137 462.2,136 463,135.3 Z" fill="#3a9fe3"/></g><rect x="461" y="124" width="7" height="7" rx="1.2" fill="#f68a14" shape-rendering="auto"/><rect x="462" y="125" width="1" height="1" fill="#fff8ee" /><rect x="464" y="125" width="1" height="1" fill="#fff8ee" /><rect x="466" y="125" width="1" height="1" fill="#fff8ee" /><rect x="463" y="126" width="1" height="1" fill="#fff8ee" /><rect x="464" y="126" width="1" height="1" fill="#fff8ee" /><rect x="465" y="126" width="1" height="1" fill="#fff8ee" /><rect x="462" y="127" width="1" height="1" fill="#fff8ee" /><rect x="463" y="127" width="1" height="1" fill="#fff8ee" /><rect x="465" y="127" width="1" height="1" fill="#fff8ee" /><rect x="466" y="127" width="1" height="1" fill="#fff8ee" /><rect x="463" y="128" width="1" height="1" fill="#fff8ee" /><rect x="464" y="128" width="1" height="1" fill="#fff8ee" /><rect x="465" y="128" width="1" height="1" fill="#fff8ee" /><rect x="462" y="129" width="1" height="1" fill="#fff8ee" /><rect x="464" y="129" width="1" height="1" fill="#fff8ee" /><rect x="466" y="129" width="1" height="1" fill="#fff8ee" /><rect x="470" y="124" width="7" height="8" fill="#ffffff" /><text x="473.5" y="131" text-anchor="middle" font-family="Liberation Sans,sans-serif" font-size="8.5" font-weight="bold" fill="#000">Σ</text><g stroke="#e1390b" stroke-width="1.8" stroke-linecap="round" shape-rendering="auto"><line x1="574" y1="128" x2="582.6" y2="136.6"/><line x1="582.8" y1="127.6" x2="574" y2="136.8"/></g><polygon points="166,163 171.5,169.5 168,169.5 168,175 164,175 164,169.5 160.5,169.5" fill="#a0a0a0" shape-rendering="auto"/><polygon points="189,175 194.5,168.5 191,168.5 191,163 187,163 187,168.5 183.5,168.5" fill="#a0a0a0" shape-rendering="auto"/><rect x="172" y="182" width="8" height="8" rx="1" fill="#1f56d8"/><rect x="173" y="183" width="6" height="2" fill="#5f8df0" /><path d="M173.7,185.2 L175.8,187.6 L178.5,184" fill="none" stroke="#fff" stroke-width="1.3" shape-rendering="auto"/><rect x="173" y="190" width="6" height="6" fill="#c39a1c" /><rect x="174" y="191" width="4" height="1" fill="#fbe7a0" /><rect x="174" y="193" width="4" height="1" fill="#fbe7a0" /><rect x="180" y="191" width="6" height="5" fill="#c39a1c" /><rect x="181" y="192" width="4" height="1" fill="#fbe7a0" /><rect x="181" y="194" width="4" height="1" fill="#fbe7a0" /><rect x="172" y="198" width="8" height="8" rx="1" fill="#1f56d8"/><rect x="173" y="199" width="6" height="2" fill="#5f8df0" /><path d="M173.7,201.2 L175.8,203.6 L178.5,200" fill="none" stroke="#fff" stroke-width="1.3" shape-rendering="auto"/><rect x="173" y="206" width="6" height="6" fill="#c39a1c" /><rect x="174" y="207" width="4" height="1" fill="#fbe7a0" /><rect x="174" y="209" width="4" height="1" fill="#fbe7a0" /><rect x="180" y="207" width="6" height="5" fill="#c39a1c" /><rect x="181" y="208" width="4" height="1" fill="#fbe7a0" /><rect x="181" y="210" width="4" height="1" fill="#fbe7a0" /><path d="M162.5,188 V199" stroke="#808080" stroke-width="1" stroke-dasharray="1 1" fill="none"/><path d="M162,188.5 H172" stroke="#808080" stroke-width="1" stroke-dasharray="1 1" fill="none"/><path d="M167,204.5 H172" stroke="#808080" stroke-width="1" stroke-dasharray="1 1" fill="none"/><path d="M178.5,212 V221" stroke="#808080" stroke-width="1" stroke-dasharray="1 1" fill="none"/><path d="M178,220.5 H187" stroke="#808080" stroke-width="1" stroke-dasharray="1 1" fill="none"/><rect x="158" y="200" width="9" height="9" fill="#848484" /><rect x="159" y="201" width="7" height="7" fill="#ffffff" /><rect x="160" y="204" width="5" height="1" fill="#000" /><path d="M520.5,328.5 H535.5 L537.5,330.5 V345.5 L535.5,347.5 H520.5 L518.5,345.5 V330.5 Z" fill="#f7f7f7" stroke="#8496c0" stroke-width="1" shape-rendering="auto"/><defs><linearGradient id="qg" x1="0" y1="0" x2="0" y2="1"><stop offset="0" stop-color="#ffffff"/><stop offset="0.12" stop-color="#e8eeff"/><stop offset="0.4" stop-color="#6f93ff"/><stop offset="0.7" stop-color="#86a4ff"/><stop offset="1" stop-color="#b4c8ff"/></linearGradient></defs><rect x="520" y="330" width="16" height="16" rx="1.2" fill="#1a1a1a" shape-rendering="auto"/><rect x="521" y="331" width="14" height="14" fill="url(#qg)"/><rect x="521" y="331" width="1" height="14" fill="#e6ecff" /><rect x="534" y="331" width="1" height="14" fill="#e6ecff" /><text x="528" y="342" text-anchor="middle" font-family="Liberation Sans,sans-serif" font-size="10" font-weight="bold" fill="#fff">?</text></svg>
</div></body></html>
